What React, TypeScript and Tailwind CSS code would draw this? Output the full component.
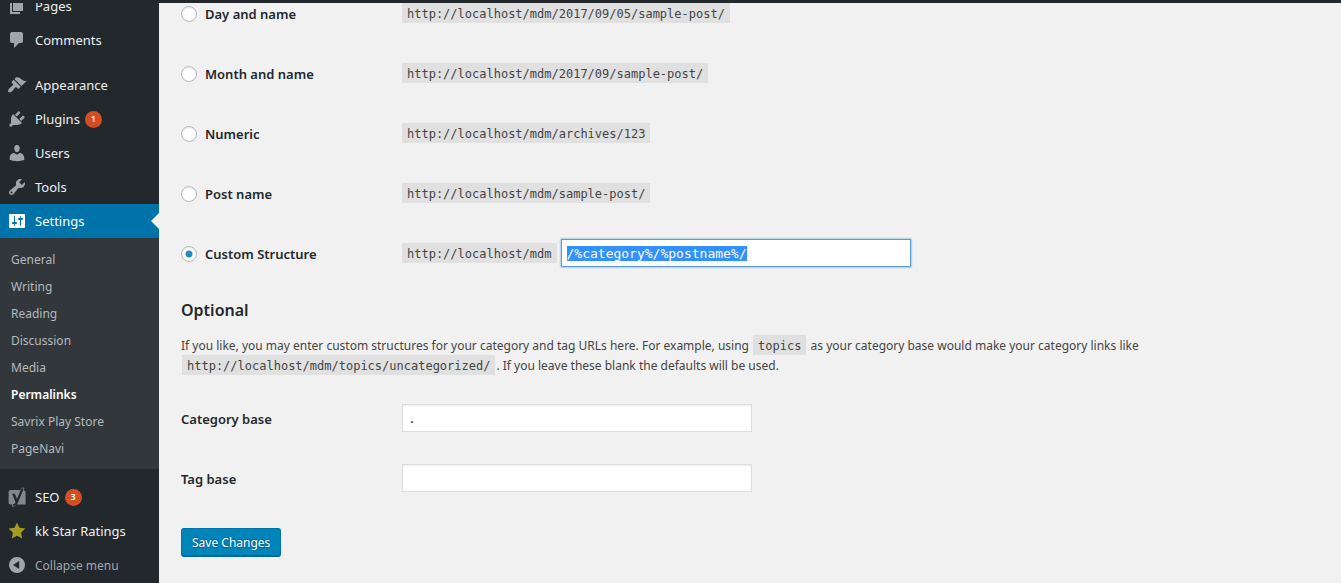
import { useEffect, useRef } from 'react';
import type { ReactNode } from 'react';

const paths = {
  pages: 'M6 15V2h10v13H6zm-1 1h8v2H3V5h2v11z',
  comments: 'M5 2h9c1.1 0 2 .9 2 2v7c0 1.1-.9 2-2 2h-2l-5 5v-5H5c-1.1 0-2-.9-2-2V4c0-1.1.9-2 2-2z',
  appearance:
    'M14.48 11.06L7.41 3.99l1.5-1.5c.5-.56 2.3-.47 3.51.32 1.21.8 1.43 1.28 2.91 2.1 1.18.64 2.45 1.26 4.45.85zm-.71.71L6.7 4.7 4.93 6.47c-.39.39-.39 1.02 0 1.41l1.06 1.06c.39.39.39 1.03 0 1.42-.6.6-1.43 1.11-2.21 1.69-.35.26-.7.53-1.01.84C1.43 14.23.4 16.08 1.4 17.07c.99 1 2.84-.03 4.18-1.36.31-.31.58-.66.85-1.02.57-.78 1.08-1.61 1.69-2.21.39-.39 1.02-.39 1.41 0l1.06 1.06c.39.39 1.02.39 1.41 0z',
  plugins:
    'M13.11 4.36L9.87 7.6 8 5.73l3.24-3.24c.35-.34 1.05-.2 1.56.32.52.51.66 1.21.31 1.55zm-8 1.77l.91-1.12 9.01 9.01-1.19.84c-.71.71-2.63 1.16-3.82 1.16H6.14L4.9 17.26c-.59.59-1.54.59-2.12 0-.59-.58-.59-1.53 0-2.12l1.24-1.24v-3.88c0-1.13.4-3.19 1.09-3.89zm7.26 3.97l3.24-3.24c.34-.35 1.04-.21 1.55.31.52.51.66 1.21.31 1.55l-3.24 3.25z',
  users:
    'M10 9.25c-2.27 0-2.73-3.44-2.73-3.44C7 4.02 7.82 2 9.97 2c2.16 0 2.98 2.02 2.71 3.81 0 0-.41 3.44-2.68 3.44zm0 2.57L12.72 10c2.39 0 4.52 2.33 4.52 4.53v2.49s-3.65 1.13-7.24 1.13c-3.65 0-7.24-1.13-7.24-1.13v-2.49c0-2.25 1.94-4.48 4.47-4.48z',
  tools:
    'M16.68 9.77c-1.34 1.34-3.3 1.67-4.95.99l-5.41 6.52c-.99.99-2.59.99-3.58 0s-.99-2.59 0-3.57l6.52-5.42c-.68-1.65-.35-3.61.99-4.95 1.28-1.28 3.12-1.62 4.72-1.06l-2.89 2.89 2.82 2.82 2.86-2.87c.53 1.58.18 3.39-1.08 4.65zM3.81 16.21c.4.39 1.04.39 1.43 0 .4-.4.4-1.04 0-1.43-.39-.4-1.03-.4-1.43 0-.39.39-.39 1.03 0 1.43z',
  settings:
    'M18 16V4c0-.55-.45-1-1-1H3c-.55 0-1 .45-1 1v12c0 .55.45 1 1 1h14c.55 0 1-.45 1-1zM8 11h1c.55 0 1 .45 1 1s-.45 1-1 1H8v1.5c0 .28-.22.5-.5.5s-.5-.22-.5-.5V13H6c-.55 0-1-.45-1-1s.45-1 1-1h1V5.5c0-.28.22-.5.5-.5s.5.22.5.5V11zm5-2h-1c-.55 0-1-.45-1-1s.45-1 1-1h1V5.5c0-.28.22-.5.5-.5s.5.22.5.5V7h1c.55 0 1 .45 1 1s-.45 1-1 1h-1v5.5c0 .28-.22.5-.5.5s-.5-.22-.5-.5V9z',
  star: 'M10 1.500l2.500 5.300 5.900.8-4.300 4.100 1.100 5.900-5.200-2.800-5.200 2.800 1.100-5.900-4.300-4.100 5.900-.8z',
  collapse: 'M10 2a8 8 0 1 0 0 16 8 8 0 0 0 0-16zM12.200 6v8L6 10z',
};

function Glyph({ name }: { name: keyof typeof paths }) {
  return (
    <svg viewBox="0 0 20 20" className="size-5 shrink-0" aria-hidden="true">
      <path d={paths[name]} fill="currentColor" fillRule="evenodd" />
    </svg>
  );
}

function SeoLogo() {
  return (
    <svg viewBox="0 0 20 20" className="size-5 shrink-0" aria-hidden="true">
      <path d="M4.200 3h9.400l.8-2.300h3.200l-.9 2.500c1.200.3 1.900 1.100 1.900 2.200V17.600H8.800C8.200 19 7 19.800 5 19.800v-2.200h-.8c-1.600 0-2.600-1-2.600-2.400V5.400C1.600 3.800 2.600 3 4.200 3z" fill="#82878c" />
      <path d="M5.200 6.800h2.700l2 5.300L14.400 1.500h2.300L11 15.600C10.100 17.900 8.600 18.900 5.800 18.900v-1.700c1.500-.2 2.300-.8 2.700-2z" fill="#23282d" />
    </svg>
  );
}

function MenuLink({ icon, label, count, current, tone }: { icon: ReactNode; label: string; count?: number; current?: boolean; tone?: string }) {
  return (
    <a
      href="#"
      aria-current={current ? 'true' : undefined}
      className={`relative flex h-[34px] items-center text-[13px] ${current ? 'bg-[#0073aa] text-white' : 'text-[#eee]'}`}
    >
      <span className={`flex w-[35px] shrink-0 items-center pl-[7px] ${tone ?? 'text-[#a0a5aa]'}`}>{icon}</span>
      <span className="pt-0.5">{label}</span>
      {count !== undefined && (
        <span className="ml-[5px] flex size-[17px] items-center justify-center rounded-full bg-[#d54e21] text-[9px] font-semibold text-white">
          {count}
        </span>
      )}
      {current && (
        <span className="absolute top-1/2 right-0 -translate-y-1/2 border-8 border-l-0 border-transparent border-r-[#f1f1f1]" />
      )}
    </a>
  );
}

const submenu = ['General', 'Writing', 'Reading', 'Discussion', 'Media', 'Permalinks', 'Savrix Play Store', 'PageNavi'];

function Sidebar() {
  return (
    <nav aria-label="Main menu" className="w-[159px] shrink-0 overflow-hidden bg-[#23282d]">
      <div className="-mt-[14px] flex flex-col">
        <MenuLink icon={<Glyph name="pages" />} label="Pages" />
        <MenuLink icon={<Glyph name="comments" />} label="Comments" />
        <div className="h-[11px]" />
        <MenuLink icon={<Glyph name="appearance" />} label="Appearance" />
        <MenuLink icon={<Glyph name="plugins" />} label="Plugins" count={1} />
        <MenuLink icon={<Glyph name="users" />} label="Users" />
        <MenuLink icon={<Glyph name="tools" />} label="Tools" />
        <MenuLink icon={<Glyph name="settings" />} label="Settings" current tone="text-white" />
        <ul className="bg-[#32373c] pt-2 pb-[7px] text-[12px]">
          {submenu.map((item) => (
            <li key={item}>
              <a
                href="#"
                className={`flex h-[27px] items-center pl-[11px] ${item === 'Permalinks' ? 'font-semibold text-white' : 'text-[#b4b9be]'}`}
              >
                {item}
              </a>
            </li>
          ))}
        </ul>
        <div className="h-[11px]" />
        <MenuLink icon={<SeoLogo />} label="SEO" count={3} />
        <MenuLink icon={<Glyph name="star" />} label="kk Star Ratings" tone="text-[#a39b22]" />
        <button type="button" className="flex h-[34px] items-center text-left text-[12px] text-[#a0a5aa]">
          <span className="flex w-[35px] shrink-0 items-center pl-[7px]">
            <Glyph name="collapse" />
          </span>
          <span className="pt-0.5">Collapse menu</span>
        </button>
      </div>
    </nav>
  );
}

function Code({ children }: { children: ReactNode }) {
  return (
    <code className="bg-[#e0e0e0] px-[5px] pt-1 pb-0.5 font-['DejaVu_Sans_Mono',monospace] text-[12px] leading-[14px] text-[#444]">
      {children}
    </code>
  );
}

const radioClass =
  'size-4 shrink-0 appearance-none rounded-full border border-[#b4b9be] bg-white shadow-[inset_0_1px_2px_rgba(0,0,0,0.1)] checked:bg-[radial-gradient(circle,#1e8cbe_3px,#fff_4px)]';
const fieldClass =
  "h-7 w-[350px] max-w-full border border-[#ddd] bg-white px-[5px] font-['DejaVu_Sans_Mono',monospace] text-[13px] text-[#32373c] shadow-[inset_0_1px_2px_rgba(0,0,0,0.07)] outline-none";

const structures = [
  { id: 'day', label: 'Day and name', url: 'http://localhost/mdm/2017/09/05/sample-post/' },
  { id: 'month', label: 'Month and name', url: 'http://localhost/mdm/2017/09/sample-post/' },
  { id: 'numeric', label: 'Numeric', url: 'http://localhost/mdm/archives/123' },
  { id: 'post', label: 'Post name', url: 'http://localhost/mdm/sample-post/' },
];

function StructureRow({ id, label, checked, children }: { id: string; label: string; checked?: boolean; children: ReactNode }) {
  return (
    <div className="flex h-[22px] items-start">
      <label htmlFor={id} className="flex h-[22px] w-[221px] shrink-0 items-center gap-2 text-[13px] font-semibold text-[#23282d]">
        <input id={id} type="radio" name="structure" defaultChecked={checked} className={radioClass} />
        <span className="pt-0.5">{label}</span>
      </label>
      {children}
    </div>
  );
}

export default function App() {
  const custom = useRef<HTMLInputElement>(null);

  useEffect(() => {
    custom.current?.focus({ preventScroll: true });
    custom.current?.select();
  }, []);

  return (
    <div className="flex h-screen flex-col overflow-hidden bg-[#f1f1f1] font-['Noto_Sans',sans-serif] text-[#444]">
      <header className="h-[3px] shrink-0 bg-[#23282d]" />
      <div className="flex min-h-0 flex-1">
        <Sidebar />
        <main className="min-w-0 flex-1 overflow-hidden pr-5 pl-[22px]">
          <form onSubmit={(event) => event.preventDefault()}>
            <div className="flex flex-col gap-[38px]">
              {structures.map((item) => (
                <StructureRow key={item.id} id={item.id} label={item.label}>
                  <Code>{item.url}</Code>
                </StructureRow>
              ))}
              <StructureRow id="custom" label="Custom Structure" checked>
                <div className="flex h-5 items-center gap-1">
                  <Code>http://localhost/mdm</Code>
                  <input
                    ref={custom}
                    type="text"
                    aria-label="Custom structure"
                    defaultValue="/%category%/%postname%/"
                    className="h-7 w-[350px] border border-[#5b9dd9] bg-white px-[5px] font-['DejaVu_Sans_Mono',monospace] text-[13px] text-[#32373c] shadow-[0_0_2px_rgba(30,140,190,0.8)] outline-none selection:bg-[#3390ff] selection:text-white"
                  />
                </div>
              </StructureRow>
            </div>

            <h2 className="mt-[33px] text-[16px] leading-6 font-semibold text-[#23282d]">Optional</h2>
            <p className="mt-[14px] text-[12px] leading-5 [&_code]:mx-px">
              If you like, you may enter custom structures for your category and tag URLs here. For example, using{' '}
              <Code>topics</Code> as your category base would make your category links like{' '}
              <Code>http://localhost/mdm/topics/uncategorized/</Code>. If you leave these blank the defaults will be used.
            </p>

            <div className="mt-7 flex flex-col gap-8">
              <div className="flex items-center">
                <label htmlFor="category-base" className="w-[221px] shrink-0 pt-[3px] text-[13px] font-semibold text-[#23282d]">
                  Category base
                </label>
                <input id="category-base" type="text" defaultValue="." className={fieldClass} />
              </div>
              <div className="flex items-center">
                <label htmlFor="tag-base" className="w-[221px] shrink-0 pt-[3px] text-[13px] font-semibold text-[#23282d]">
                  Tag base
                </label>
                <input id="tag-base" type="text" className={fieldClass} />
              </div>
            </div>

            <button
              type="submit"
              className="mt-9 h-[29px] rounded-[3px] border border-[#0073aa] border-b-[#006799] bg-[#0085ba] px-[10px] text-[12px] text-white shadow-[inset_0_-1px_0_#006799] [text-shadow:0_-1px_1px_#006799,1px_0_1px_#006799,0_1px_1px_#006799]"
            >
              Save Changes
            </button>
          </form>
        </main>
      </div>
    </div>
  );
}
